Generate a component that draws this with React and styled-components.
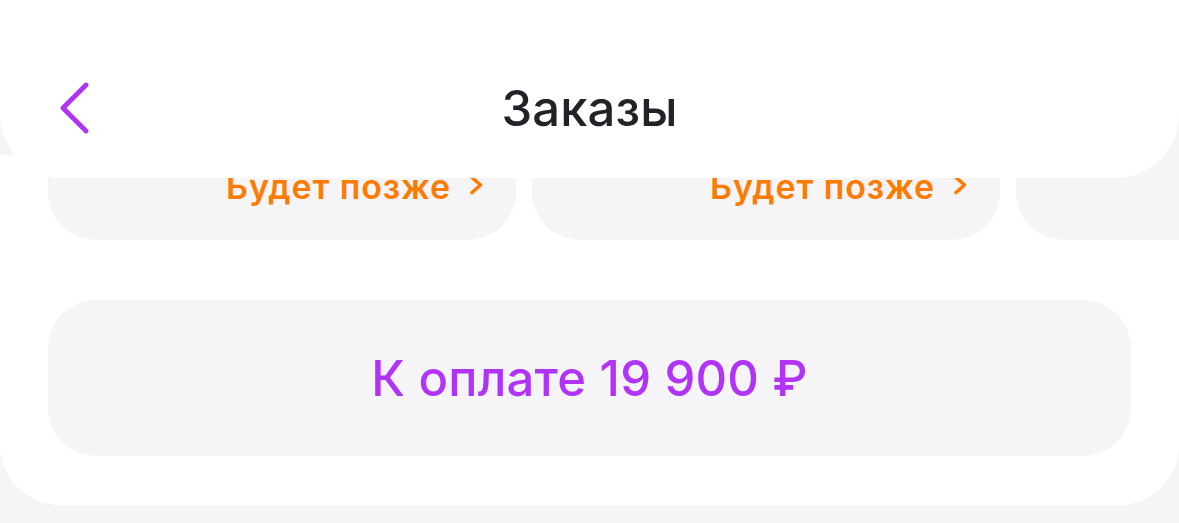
import React from "react";
import styled, { createGlobalStyle } from "styled-components";

const GlobalStyle = createGlobalStyle`
  html, body {
    margin: 0;
    padding: 0;
    background: #f5f5f8;
    font-family: Inter, "Noto Sans", sans-serif;
    overflow: hidden;
  }
`;

const orders = [{ id: 1, status: "Будет позже" }, { id: 2, status: "Будет позже" }, { id: 3, status: "" }];

function BackIcon() {
  return (
    <svg width="30" height="52" viewBox="0 0 30 52" fill="none">
      <path d="M26 3L3 26L26 49" stroke="#b134f6" strokeWidth="4.8" strokeLinecap="round" strokeLinejoin="round" />
    </svg>
  );
}

function Chevron() {
  return (
    <svg width="15" height="20" viewBox="0 0 15 20" fill="none">
      <path d="M3 2.5L11.5 10L3 17.5" stroke="#ff7b00" strokeWidth="3.6" strokeLinecap="round" strokeLinejoin="round" />
    </svg>
  );
}

export default function App() {
  return (
    <>
      <GlobalStyle />
      <Header>
        <BackBtn>
          <BackIcon />
        </BackBtn>
        <Title>Заказы</Title>
        <span />
      </Header>
      <Sheet>
        <OrdersRow>
          {orders.map((o) => (
            <OrderCard key={o.id}>
              {o.status && (
                <Status>
                  {o.status}
                  <Chevron />
                </Status>
              )}
            </OrderCard>
          ))}
        </OrdersRow>
        <PayButton>К оплате 19 900 ₽</PayButton>
      </Sheet>
    </>
  );
}

const Header = styled.header`
  position: fixed;
  top: 0;
  left: 0;
  right: 0;
  z-index: 10;
  height: 178px;
  box-sizing: border-box;
  padding: 38px 60px 0;
  background: #fff;
  border-radius: 0 0 64px 64px;
  display: grid;
  grid-template-columns: 1fr auto 1fr;
  align-items: center;
`;

const BackBtn = styled.button`
  border: none;
  background: none;
  padding: 0;
  width: 30px;
  height: 52px;
  display: flex;
  cursor: pointer;
`;

const Title = styled.h1`
  margin: 0;
  font-size: 49px;
  font-weight: 500;
  color: #222228;
  letter-spacing: 0.1px;
`;

const Sheet = styled.main`
  margin-top: 155px;
  background: #fff;
  border-radius: 0 0 60px 60px;
  padding-bottom: 49px;
`;

const OrdersRow = styled.div`
  display: flex;
  gap: 16px;
  padding-left: 48px;
  overflow: hidden;
`;

const OrderCard = styled.div`
  flex-shrink: 0;
  width: 468px;
  height: 85px;
  box-sizing: border-box;
  padding: 11px 32px 0 0;
  background: #f5f5f8;
  border-radius: 0 0 48px 48px;
  display: flex;
  justify-content: flex-end;
`;

const Status = styled.div`
  display: flex;
  align-items: center;
  gap: 18px;
  height: 40px;
  font-size: 34px;
  font-weight: 600;
  letter-spacing: 0.9px;
  color: #ff7b00;

  svg {
    margin-top: -2px;
  }
`;

const PayButton = styled.button`
  display: flex;
  align-items: center;
  justify-content: center;
  width: calc(100% - 96px);
  margin: 60px 0 0 48px;
  height: 156px;
  border: none;
  border-radius: 48px;
  background: #f5f5f8;
  font-family: inherit;
  font-size: 49px;
  font-weight: 500;
  letter-spacing: 0.2px;
  color: #b134f6;
  cursor: pointer;
`;
